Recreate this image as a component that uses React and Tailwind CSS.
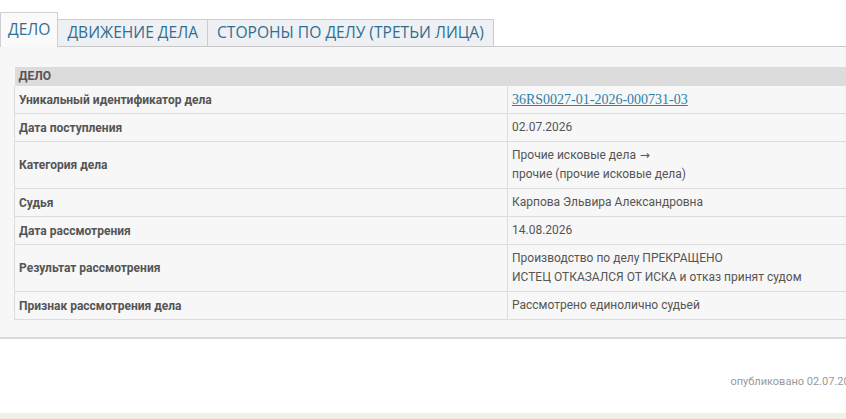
import React from "react";

const rows = [
  { label: "Уникальный идентификатор дела", value: ["36RS0027-01-2026-000731-03"], link: true },
  { label: "Дата поступления", value: ["02.07.2026"] },
  { label: "Категория дела", value: ["Прочие исковые дела", "прочие (прочие исковые дела)"], arrow: true },
  { label: "Судья", value: ["Карпова Эльвира Александровна"] },
  { label: "Дата рассмотрения", value: ["14.08.2026"] },
  {
    label: "Результат рассмотрения",
    value: ["Производство по делу ПРЕКРАЩЕНО", "ИСТЕЦ ОТКАЗАЛСЯ ОТ ИСКА и отказ принят судом"],
  },
  { label: "Признак рассмотрения дела", value: ["Рассмотрено единолично судьей"] },
];

const tabs = ["ДВИЖЕНИЕ ДЕЛА", "СТОРОНЫ ПО ДЕЛУ (ТРЕТЬИ ЛИЦА)"];

export default function App() {
  return (
    <div className="w-[846px] h-[419px] overflow-hidden bg-white flex flex-col">
      <div className="w-[876px] shrink-0">
        {/* tabs */}
        <div className="flex items-end pt-[12px] font-['Open_Sans',sans-serif] text-[15.6px] text-[#2e6f90]">
          <div className="h-[35px] px-[7px] flex items-center bg-[#fafafa] border border-b-0 border-[#cfcfcf] relative z-10 -mb-px">
            ДЕЛО
          </div>
          {tabs.map((t) => (
            <div
              key={t}
              className="h-[27px] px-[9px] flex items-center bg-[#eef0f4] border border-l-0 border-b-0 border-[#c8ccd4]"
            >
              {t}
            </div>
          ))}
        </div>

        {/* panel */}
        <div className="bg-[#f7f7f7] border-t border-[#c8c8c8] border-b-2 border-b-[#d9d9d9] pt-[20px] pb-[17px] pl-[14px]">
          <table className="w-[862px] border-collapse font-['Roboto',sans-serif] text-[12px] text-[#555]">
            <thead>
              <tr className="bg-[#dcdcdc]">
                <th colSpan={2} className="h-[19px] text-left font-bold px-[4px] py-0 leading-[19px]">
                  ДЕЛО
                </th>
              </tr>
            </thead>
            <tbody>
              {rows.map((r) => (
                <tr key={r.label}>
                  <td className="w-[493px] border border-t-0 border-[#dcdcdc] px-[4px] font-bold align-middle">
                    <div className={r.value.length > 1 ? "h-[46px] flex items-center" : "h-[27px] flex items-center"}>
                      {r.label}
                    </div>
                  </td>
                  <td className="border border-t-0 border-[#dcdcdc] px-[4px] align-middle">
                    {r.link ? (
                      <a
                        href="#"
                        className="font-['Liberation_Serif',serif] text-[14px] text-[#2f7fa6] underline"
                      >
                        {r.value[0]}
                      </a>
                    ) : (
                      <div className="leading-[19px]">
                        {r.value.map((v, i) => (
                          <div key={v}>
                            {v}
                            {r.arrow && i === 0 && (
                              <span className="font-['DejaVu_Sans',sans-serif] text-[12px]"> →</span>
                            )}
                          </div>
                        ))}
                      </div>
                    )}
                  </td>
                </tr>
              ))}
            </tbody>
          </table>
        </div>

        {/* footer */}
        <div className="h-[74px] flex items-center justify-end pr-[14px] pt-[12px] font-['Roboto',sans-serif] text-[11px] text-[#999]">
          опубликовано 02.07.2026
        </div>
      </div>
      <div className="flex-1 bg-[#f4efe6]" />
    </div>
  );
}
